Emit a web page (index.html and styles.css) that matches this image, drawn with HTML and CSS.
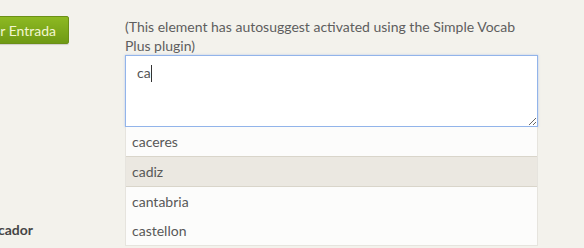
FILE: index.html
```html
<!DOCTYPE html>
<html>
<head>
<meta charset="utf-8">
<link rel="stylesheet" href="styles.css">
</head>
<body>
<div class="page">
  <div class="side">
    <button class="btn">Guardar Entrada</button>
    <span class="label">Identificador</span>
  </div>
  <div class="main">
    <p class="help">(This element has autosuggest activated using the Simple Vocab Plus plugin)</p>
    <div class="textarea">ca<span class="caret"></span></div>
    <ul class="suggest">
      <li>caceres</li>
      <li class="active">cadiz</li>
      <li>cantabria</li>
      <li>castellon</li>
    </ul>
  </div>
</div>
</body>
</html>
```

FILE: styles.css
```css
html, body {
  margin: 0;
  padding: 0;
}
body {
  background: #f3f2ec;
  font-family: Lato, "Noto Sans", sans-serif;
  color: #5a5a5a;
  width: 584px;
  height: 248px;
  overflow: hidden;
}
.page {
  display: flex;
  gap: 56px;
}
.side {
  width: 69px;
  height: 248px;
  overflow: hidden;
  display: flex;
  flex-direction: column;
  align-items: flex-end;
  justify-content: space-between;
  padding-top: 16px;
  box-sizing: border-box;
  flex-shrink: 0;
}
.btn {
  height: 28px;
  padding: 0 12px 0 10px;
  border: 1px solid #6b9016;
  border-radius: 2px;
  background: linear-gradient(#8db922, #6f9a14);
  color: #f2f6cf;
  font-family: Lato, "Noto Sans", sans-serif;
  font-size: 14px;
  white-space: nowrap;
  box-shadow: 0 1px 1px rgba(0,0,0,0.15);
  flex-shrink: 0;
}
.label {
  font-weight: bold;
  font-size: 14px;
  color: #454545;
  white-space: nowrap;
  margin-right: 36px;
  margin-bottom: 10px;
}
.main {
  width: 413px;
  padding-top: 17px;
}
.help {
  margin: 0;
  font-size: 14px;
  line-height: 19px;
  color: #5e5e5e;
}
.textarea {
  box-sizing: border-box;
  height: 72px;
  background: #fff;
  border: 1px solid #92b4ea;
  box-shadow: 0 0 2px rgba(120,160,230,0.5);
  padding: 8px 11px;
  font-size: 14px;
  line-height: 18px;
  color: #555;
  resize: both;
  overflow: auto;
}
.caret {
  display: inline-block;
  width: 1px;
  height: 17px;
  background: #333;
  vertical-align: -4px;
}
.suggest {
  list-style: none;
  margin: 0;
  padding: 0;
  background: #fcfcfb;
  border: 1px solid #e6e4de;
  border-top: 0;
}
.suggest li {
  height: 29px;
  line-height: 29px;
  padding-left: 6px;
  font-size: 14px;
  color: #585858;
}
.suggest li.active {
  background: #ebe8e1;
  border-top: 1px solid #d9d5ca;
  border-bottom: 1px solid #d9d5ca;
}
```
